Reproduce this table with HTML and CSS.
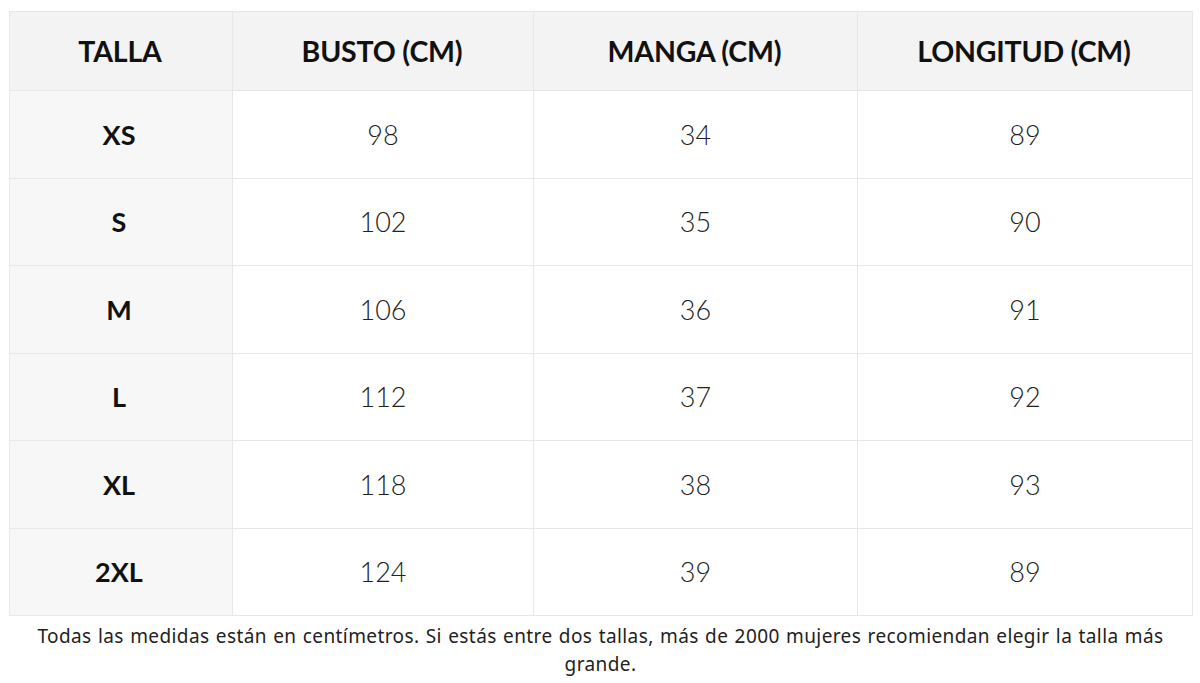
FILE: index.html
```html
<!DOCTYPE html>
<html lang="es">
<head>
<meta charset="utf-8">
<title>Guía de tallas</title>
<link rel="stylesheet" href="styles.css">
</head>
<body>
<div class="wrap">
  <table class="sizes">
    <colgroup>
      <col class="c1"><col class="c2"><col class="c3"><col class="c4">
    </colgroup>
    <thead>
      <tr><th>TALLA</th><th>BUSTO (CM)</th><th>MANGA (CM)</th><th>LONGITUD (CM)</th></tr>
    </thead>
    <tbody>
      <tr><th>XS</th><td>98</td><td>34</td><td>89</td></tr>
      <tr><th>S</th><td>102</td><td>35</td><td>90</td></tr>
      <tr><th>M</th><td>106</td><td>36</td><td>91</td></tr>
      <tr><th>L</th><td>112</td><td>37</td><td>92</td></tr>
      <tr><th>XL</th><td>118</td><td>38</td><td>93</td></tr>
      <tr><th>2XL</th><td>124</td><td>39</td><td>89</td></tr>
    </tbody>
  </table>
  <p class="note">Todas las medidas están en centímetros. Si estás entre dos tallas, más de 2000 mujeres recomiendan elegir la talla más grande.</p>
</div>
</body>
</html>
```
FILE: styles.css
```css
html, body {
  margin: 0;
  padding: 0;
  background: #ffffff;
}
body {
  font-family: Lato, "Noto Sans", sans-serif;
  color: #111;
}
.wrap {
  padding: 11px 8px 0 9px;
}
.sizes {
  width: 1183px;
  border-collapse: collapse;
  table-layout: fixed;
  border: 1px solid #e8e8e8;
}
.c1 { width: 223px; }
.c2 { width: 301px; }
.c3 { width: 324px; }
.c4 { width: 335px; }
.sizes th, .sizes td {
  border: 1px solid #e8e8e8;
  text-align: center;
  padding: 0;
}
.sizes thead th {
  height: 78px;
  background: #f3f3f3;
  font-weight: 700;
  font-size: 28.5px;
  letter-spacing: -0.2px;
  padding-right: 2px;
}
.sizes tbody th {
  background: #f7f7f7;
  font-weight: 700;
  font-size: 27px;
  height: 86.5px;
  padding-right: 4px;
}
.sizes tbody td {
  font-weight: 300;
  font-size: 27px;
  color: #222;
  height: 86.5px;
}
.note {
  margin: 6px 16px 0;
  text-align: center;
  font-family: "Noto Sans", sans-serif;
  font-size: 19px;
  letter-spacing: 0.4px;
  word-spacing: 1px;
  line-height: 28px;
  color: #222;
}
```
